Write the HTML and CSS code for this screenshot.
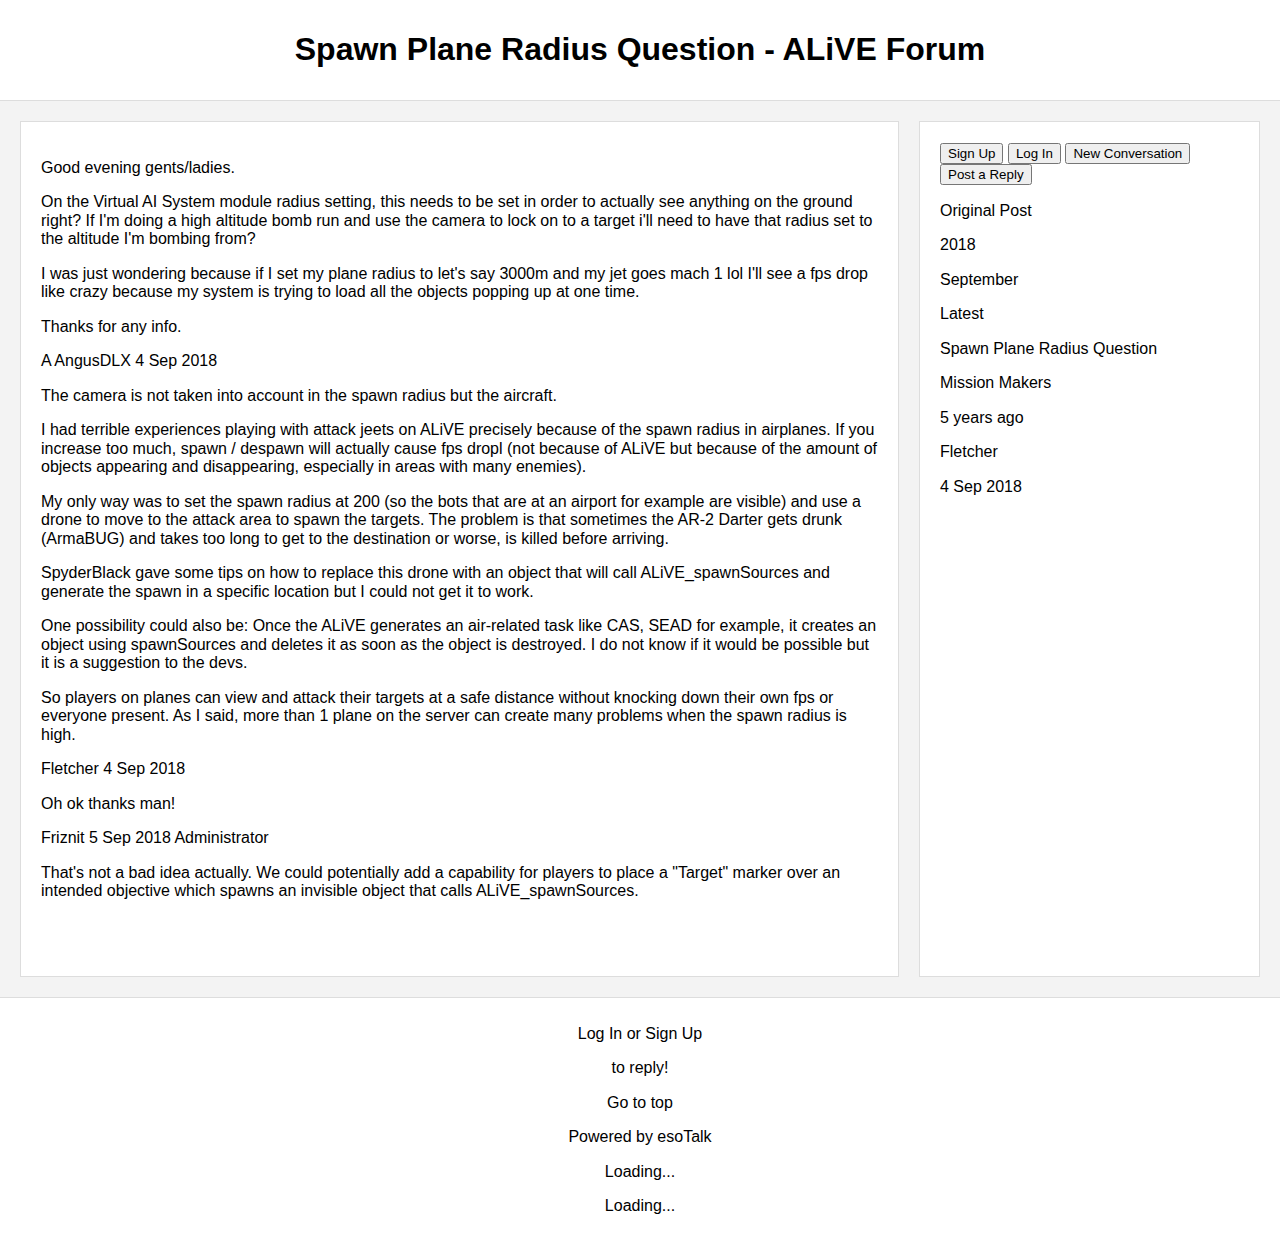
FILE: index.html
```html
<!DOCTYPE html>
<html lang="en">
<head>
<meta charset="utf-8">
<title>Spawn Plane Radius Question - ALiVE Forum</title>
<link rel="stylesheet" href="styles.css">
</head>
<body>
<header class="site-header">
  <h1 class="title">Spawn Plane Radius Question - ALiVE Forum</h1>
</header>
<main class="layout">
  <article class="card posts">
    <p>Good evening gents/ladies.</p>
    <p>On the Virtual AI System module radius setting, this needs to be set in order to actually see anything on the ground right? If I'm doing a high altitude bomb run and use the camera to lock on to a target i'll need to have that radius set to the altitude I'm bombing from?</p>
    <p>I was just wondering because if I set my plane radius to let's say 3000m and my jet goes mach 1 lol I'll see a fps drop like crazy because my system is trying to load all the objects popping up at one time.</p>
    <p>Thanks for any info.</p>
    <p>A AngusDLX 4 Sep 2018</p>
    <p>The camera is not taken into account in the spawn radius but the aircraft.</p>
    <p>I had terrible experiences playing with attack jeets on ALiVE precisely because of the spawn radius in airplanes. If you increase too much, spawn / despawn will actually cause fps dropl (not because of ALiVE but because of the amount of objects appearing and disappearing, especially in areas with many enemies).</p>
    <p>My only way was to set the spawn radius at 200 (so the bots that are at an airport for example are visible) and use a drone to move to the attack area to spawn the targets. The problem is that sometimes the AR-2 Darter gets drunk (ArmaBUG) and takes too long to get to the destination or worse, is killed before arriving.</p>
    <p>SpyderBlack gave some tips on how to replace this drone with an object that will call ALiVE_spawnSources and generate the spawn in a specific location but I could not get it to work.</p>
    <p>One possibility could also be: Once the ALiVE generates an air-related task like CAS, SEAD for example, it creates an object using spawnSources and deletes it as soon as the object is destroyed. I do not know if it would be possible but it is a suggestion to the devs.</p>
    <p>So players on planes can view and attack their targets at a safe distance without knocking down their own fps or everyone present. As I said, more than 1 plane on the server can create many problems when the spawn radius is high.</p>
    <p>Fletcher 4 Sep 2018</p>
    <p>Oh ok thanks man!</p>
    <p>Friznit 5 Sep 2018 Administrator</p>
    <p>That's not a bad idea actually. We could potentially add a capability for players to place a "Target" marker over an intended objective which spawns an invisible object that calls ALiVE_spawnSources.</p>
  </article>
  <aside class="card sidebar">
    <div class="actions">
      <button class="btn">Sign Up</button>
      <button class="btn">Log In</button>
      <button class="btn">New Conversation</button>
      <button class="btn">Post a Reply</button>
    </div>
    <p>Original Post</p>
    <p>2018</p>
    <p>September</p>
    <p>Latest</p>
    <p>Spawn Plane Radius Question</p>
    <p>Mission Makers</p>
    <p>5 years ago</p>
    <p>Fletcher</p>
    <p>4 Sep 2018</p>
  </aside>
</main>
<footer class="site-footer">
  <p>Log In or Sign Up</p>
  <p>to reply!</p>
  <p>Go to top</p>
  <p>Powered by esoTalk</p>
  <p>Loading...</p>
  <p>Loading...</p>
</footer>
</body>
</html>
```
FILE: styles.css
```css
html, body {
  margin: 0;
  padding: 0;
}
body {
  font-family: "Liberation Sans", Arial, sans-serif;
  font-size: 16px;
  line-height: 18.5px;
  color: #000;
  background: #fff;
}
.site-header {
  padding: 10px;
  text-align: center;
  border-bottom: 1px solid #ddd;
}
.title {
  font-size: 32px;
  line-height: 37px;
  font-weight: bold;
  margin: 21.44px 0;
}
.layout {
  display: flex;
  gap: 20px;
  padding: 20px;
  background: #f3f3f3;
  align-items: stretch;
}
.card {
  background: #fff;
  border: 1px solid #ddd;
  padding: 20px;
  box-sizing: border-box;
}
.posts {
  flex: 1;
  padding-top: 21px;
  padding-bottom: 59px;
}
.sidebar {
  width: 341px;
  flex: none;
}
.actions {
  padding-top: 1px;
  padding-bottom: 1px;
}
.btn {
  font-family: "Liberation Sans", Arial, sans-serif;
  font-size: 13.333px;
  line-height: normal;
}
.site-footer {
  border-top: 1px solid #ddd;
  padding: 11px 10px 9px;
  text-align: center;
}
```
